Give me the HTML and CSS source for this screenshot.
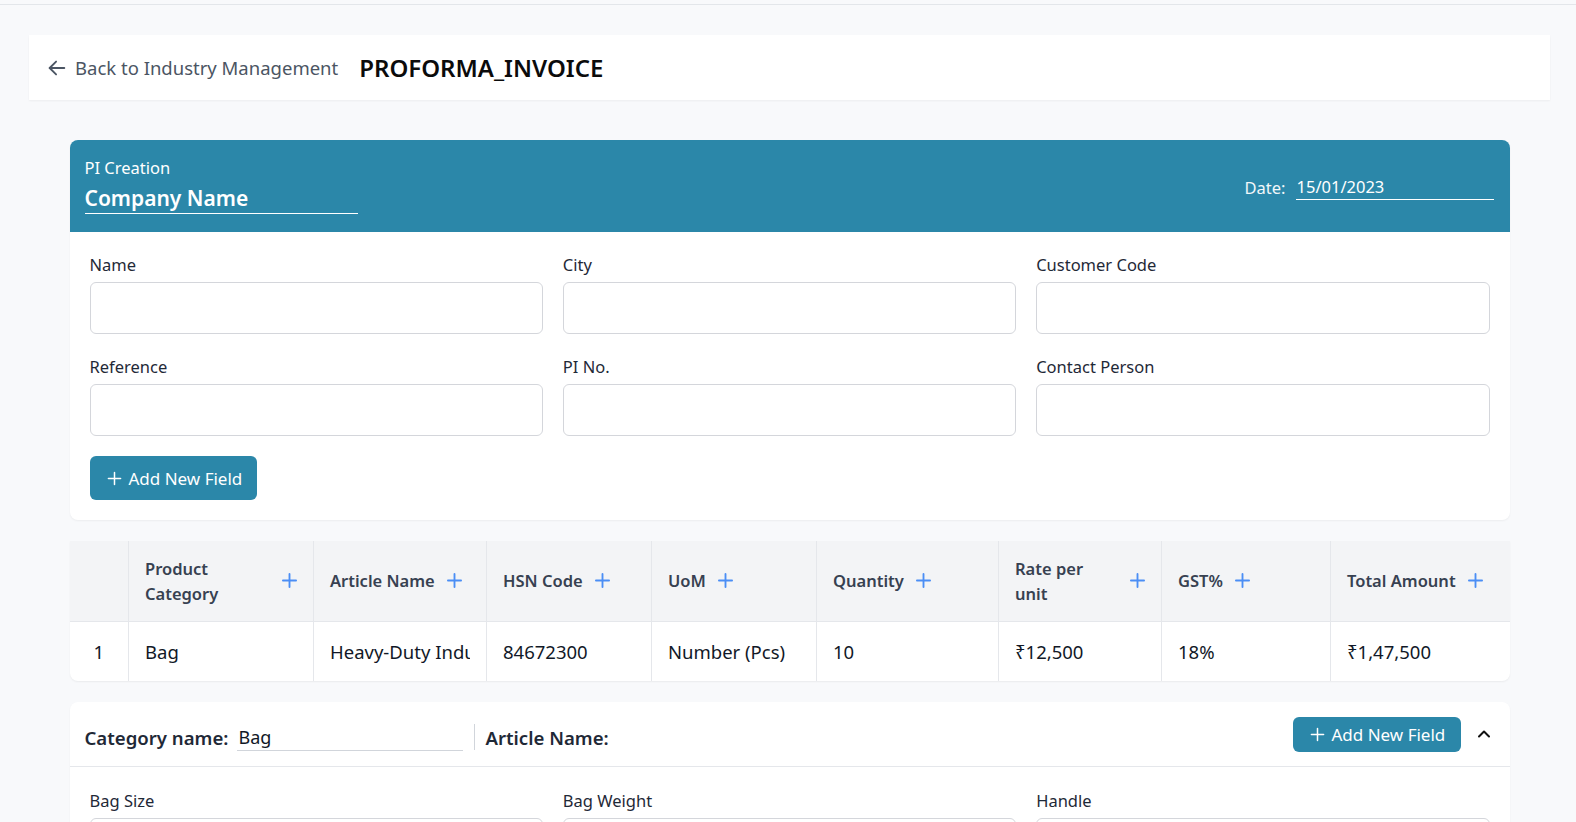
FILE: index.html
```html
<!DOCTYPE html>
<html lang="en">
<head>
<meta charset="utf-8">
<title>PROFORMA_INVOICE</title>
<link rel="stylesheet" href="styles.css">
</head>
<body>
<div class="topbar"></div>
<div class="page">
  <div class="header-card">
    <a class="back" href="#">
      <svg class="back-icon" width="22" height="22" viewBox="0 0 24 24" fill="none" stroke="currentColor" stroke-width="2" stroke-linecap="round" stroke-linejoin="round"><path d="M20 12H4"/><path d="M11 19l-7-7 7-7"/></svg>
      <span>Back to Industry Management</span>
    </a>
    <h1 class="title">PROFORMA_INVOICE</h1>
  </div>

  <div class="content">
    <section class="pi-card">
      <div class="pi-head">
        <div class="pi-head-left">
          <div class="pi-sub">PI Creation</div>
          <div class="company">Company Name</div>
        </div>
        <div class="date-group">
          <span class="date-label">Date:</span>
          <span class="date-input">15/01/2023</span>
        </div>
      </div>
      <div class="form-grid">
        <div class="field"><label>Name</label><div class="input"></div></div>
        <div class="field"><label>City</label><div class="input"></div></div>
        <div class="field"><label>Customer Code</label><div class="input"></div></div>
        <div class="field"><label>Reference</label><div class="input"></div></div>
        <div class="field"><label>PI No.</label><div class="input"></div></div>
        <div class="field"><label>Contact Person</label><div class="input"></div></div>
      </div>
      <div class="btn-row">
        <button class="btn btn-lg">
          <svg width="15" height="15" viewBox="0 0 16 16" fill="none" stroke="currentColor" stroke-width="1.6" stroke-linecap="round"><path d="M8 1.5v13M1.5 8h13"/></svg>
          <span>Add New Field</span>
        </button>
      </div>
    </section>

    <div class="table-card">
      <table class="items">
        <colgroup>
          <col class="c0"><col class="c1"><col class="c2"><col class="c3"><col class="c4"><col class="c5"><col class="c6"><col class="c7"><col class="c8">
        </colgroup>
        <thead>
          <tr>
            <th></th>
            <th><div class="th-in"><span>Product Category</span><svg class="plus" viewBox="0 0 16 16"><path d="M8 1v14M1 8h14"/></svg></div></th>
            <th><div class="th-in"><span>Article Name</span><svg class="plus" viewBox="0 0 16 16"><path d="M8 1v14M1 8h14"/></svg></div></th>
            <th><div class="th-in"><span>HSN Code</span><svg class="plus" viewBox="0 0 16 16"><path d="M8 1v14M1 8h14"/></svg></div></th>
            <th><div class="th-in"><span>UoM</span><svg class="plus" viewBox="0 0 16 16"><path d="M8 1v14M1 8h14"/></svg></div></th>
            <th><div class="th-in"><span>Quantity</span><svg class="plus" viewBox="0 0 16 16"><path d="M8 1v14M1 8h14"/></svg></div></th>
            <th><div class="th-in"><span>Rate per unit</span><svg class="plus" viewBox="0 0 16 16"><path d="M8 1v14M1 8h14"/></svg></div></th>
            <th><div class="th-in"><span>GST%</span><svg class="plus" viewBox="0 0 16 16"><path d="M8 1v14M1 8h14"/></svg></div></th>
            <th><div class="th-in"><span>Total Amount</span><svg class="plus" viewBox="0 0 16 16"><path d="M8 1v14M1 8h14"/></svg></div></th>
          </tr>
        </thead>
        <tbody>
          <tr>
            <td class="idx">1</td>
            <td><div class="cell">Bag</div></td>
            <td><div class="cell">Heavy-Duty Industrial Bag</div></td>
            <td><div class="cell">84672300</div></td>
            <td><div class="cell">Number (Pcs)</div></td>
            <td><div class="cell">10</div></td>
            <td><div class="cell">₹12,500</div></td>
            <td><div class="cell">18%</div></td>
            <td><div class="cell">₹1,47,500</div></td>
          </tr>
        </tbody>
      </table>
    </div>

    <section class="cat-card">
      <div class="cat-head">
        <span class="cat-label">Category name:</span>
        <span class="cat-input">Bag</span>
        <span class="sep"></span>
        <span class="cat-label">Article Name:</span>
        <span class="spacer"></span>
        <button class="btn btn-sm">
          <svg width="15" height="15" viewBox="0 0 16 16" fill="none" stroke="currentColor" stroke-width="1.6" stroke-linecap="round"><path d="M8 1.5v13M1.5 8h13"/></svg>
          <span>Add New Field</span>
        </button>
        <svg class="chev" width="16" height="16" viewBox="0 0 16 16" fill="none" stroke="#111" stroke-width="2" stroke-linecap="round" stroke-linejoin="round"><path d="M3 10.5L8 5.5l5 5"/></svg>
      </div>
      <div class="form-grid cat-grid">
        <div class="field"><label>Bag Size</label><div class="input"></div></div>
        <div class="field"><label>Bag Weight</label><div class="input"></div></div>
        <div class="field"><label>Handle</label><div class="input"></div></div>
      </div>
    </section>
  </div>
</div>
</body>
</html>
```
FILE: styles.css
```css
* { box-sizing: border-box; }

html, body {
  margin: 0;
  padding: 0;
  background: #f8f9fb;
  font-family: "Noto Sans", "Open Sans", sans-serif;
  color: #1f2937;
}

.topbar {
  height: 5px;
  border-bottom: 1px solid #e3e6ea;
}

.page {
  padding: 30px 26px 40px 29px;
}

.header-card {
  background: #fff;
  height: 65px;
  display: flex;
  align-items: center;
  padding: 0 17px;
  box-shadow: 0 1px 2px rgba(0, 0, 0, 0.05);
}

.back {
  display: flex;
  align-items: center;
  gap: 7px;
  color: #4b5563;
  text-decoration: none;
  font-size: 18.5px;
  line-height: 26px;
}

.back-icon { color: #4b5563; flex: none; }

.title {
  margin: 0 0 0 21px;
  font-size: 24px;
  font-weight: 600;
  color: #0b0b0b;
  letter-spacing: 0;
}

.content {
  max-width: 1440px;
  margin: 40px auto 0;
}

.pi-card {
  background: #fff;
  border-radius: 8px;
  overflow: hidden;
  box-shadow: 0 1px 2px rgba(0, 0, 0, 0.05);
}

.pi-head {
  background: #2b87a9;
  color: #fff;
  display: flex;
  align-items: center;
  justify-content: space-between;
  padding: 17px 16px 18px 15px;
}

.pi-sub {
  font-size: 16.5px;
  line-height: 22px;
}

.company {
  width: 273px;
  font-size: 21px;
  font-weight: 600;
  line-height: 30px;
  padding-top: 4px;
  border-bottom: 1px solid #fff;
}

.date-group {
  display: flex;
  align-items: flex-end;
  gap: 10px;
  margin-top: 4px;
}

.date-label {
  font-size: 16.5px;
  line-height: 24px;
  color: #f1f7fa;
}

.date-input {
  width: 198px;
  font-size: 16.5px;
  line-height: 24px;
  border-bottom: 1px solid #fff;
  padding-left: 1px;
}

.form-grid {
  display: grid;
  grid-template-columns: repeat(3, 1fr);
  gap: 22px 20px;
  padding: 22px 20px 0;
}

.field label {
  display: block;
  font-size: 16.5px;
  line-height: 22px;
  color: #1f2937;
  margin-bottom: 6px;
}

.input {
  height: 52px;
  border: 1px solid #d4d6db;
  border-radius: 6px;
  background: #fff;
}

.btn-row {
  padding: 20px 20px 20px;
}

.btn {
  display: inline-flex;
  align-items: center;
  gap: 7px;
  background: #2b87a9;
  color: #fff;
  border: none;
  border-radius: 6px;
  font-family: inherit;
  cursor: pointer;
}

.btn-lg {
  height: 44px;
  width: 167px;
  padding: 0 0 0 17px;
  font-size: 17px;
}

.btn-sm {
  height: 35px;
  width: 168px;
  padding: 0 0 0 17px;
  font-size: 17px;
}

.table-card {
  margin-top: 21px;
  background: #fff;
  border-radius: 0 0 8px 8px;
  overflow: hidden;
  box-shadow: 0 1px 2px rgba(0, 0, 0, 0.06);
}

.items {
  width: 100%;
  border-collapse: collapse;
  table-layout: fixed;
}

.c0 { width: 59px; }
.c1 { width: 185px; }
.c2 { width: 173px; }
.c3 { width: 165px; }
.c4 { width: 165px; }
.c5 { width: 182px; }
.c6 { width: 163px; }
.c7 { width: 169px; }
.c8 { width: 179px; }

.items th {
  background: #f3f4f6;
  height: 80px;
  padding: 0 16px;
  text-align: left;
  font-size: 16.5px;
  font-weight: 600;
  line-height: 25px;
  color: #374151;
  border-bottom: 1px solid #e5e7eb;
  border-left: 1px solid #e5e7eb;
}

.items th:first-child,
.items td:first-child { border-left: none; }

.th-in {
  display: flex;
  align-items: center;
  gap: 12px;
}

.th-in span { min-width: 0; }

.plus {
  width: 15px;
  height: 15px;
  flex: none;
  fill: none;
  stroke: #4b8ef5;
  stroke-width: 2;
  stroke-linecap: round;
}

.items td {
  height: 60px;
  padding: 0 16px;
  font-size: 18.5px;
  color: #111827;
  border-left: 1px solid #e5e7eb;
}

.cell {
  white-space: nowrap;
  overflow: hidden;
}

.items td.idx {
  text-align: center;
  padding: 0;
}

.cat-card {
  margin-top: 21px;
  background: #fff;
  border-radius: 8px 8px 0 0;
  box-shadow: 0 1px 2px rgba(0, 0, 0, 0.05);
  padding-bottom: 30px;
}

.cat-head {
  height: 65px;
  display: flex;
  align-items: center;
  padding: 0 18px 0 15px;
  border-bottom: 1px solid #e5e7eb;
}

.cat-label {
  font-size: 18.6px;
  font-weight: 600;
  color: #1f2937;
  margin-top: 6px;
}

.cat-input {
  width: 226px;
  margin-left: 9px;
  margin-top: 6px;
  font-size: 18px;
  line-height: 26px;
  color: #111827;
  border-bottom: 1px solid #d1d5db;
  padding-left: 1px;
}

.sep {
  width: 1px;
  height: 26px;
  background: #d1d5db;
  margin: 6px 10px 0 11px;
}

.spacer { flex: 1; }

.chev { margin-left: 15px; flex: none; }

.cat-grid { padding-top: 23px; }
```
